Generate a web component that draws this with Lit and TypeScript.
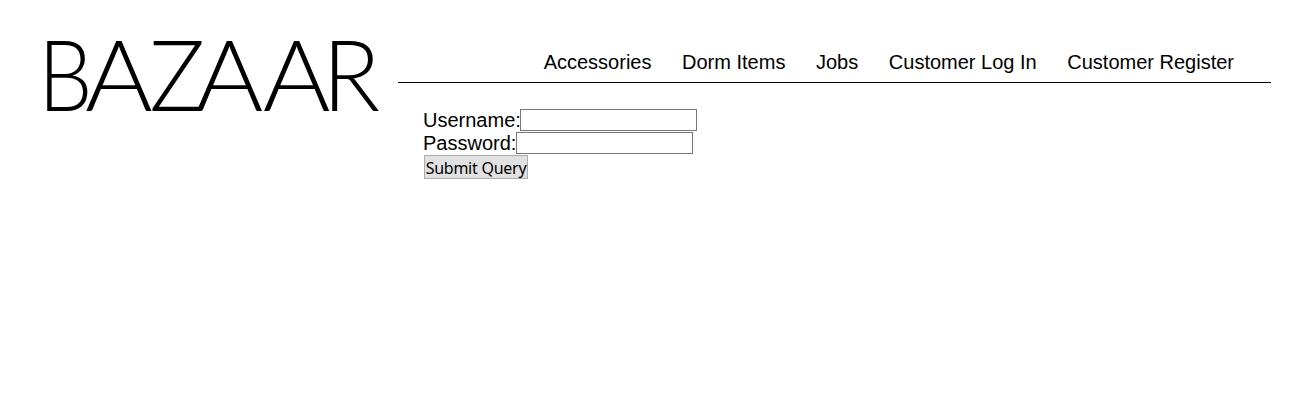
import { LitElement, html, svg, css } from "lit";
import { customElement } from "lit/decorators.js";

const LINKS = ["Accessories", "Dorm Items", "Jobs", "Customer Log In", "Customer Register"];

// Wordmark letters: character, pen position, horizontal stretch.
const LETTERS: [string, number, number][] = [
  ["B", 38.3, 0.87],
  ["A", 85, 1.05],
  ["Z", 149.2, 0.95],
  ["A", 195.5, 1.05],
  ["A", 262.8, 1.05],
  ["R", 322.3, 0.97],
];

@customElement("app-root")
export class AppRoot extends LitElement {
  static styles = css`
    :host { display: flex; height: 416px; background: #fff; color: #000;
      font: 20px/23px "Liberation Sans", Arial, sans-serif; }
    .logo { display: block; width: 398px; height: 170px; flex: none; }
    .logo text { font-family: Lato, sans-serif; font-weight: 300; font-size: 98.5px; fill: #000; }
    .main { width: 873px; display: flex; flex-direction: column; }
    nav { box-sizing: border-box; height: 83px; padding: 51px 37px 0 0; display: flex;
      justify-content: flex-end; gap: 30.6px; border-bottom: 1px solid #000; white-space: nowrap; }
    a { color: inherit; text-decoration: none; }
    form { padding: 25px 0 0 25px; display: flex; flex-direction: column; align-items: flex-start; }
    label { display: flex; height: 23px; line-height: 24px; }
    input { box-sizing: border-box; width: 177px; height: 22px; margin: 1px 0 0; padding: 1px 2px;
      border: 1px solid #767676; border-radius: 0; background: #fff; font: 16px "Liberation Sans", sans-serif; }
    .user { margin-left: -0.8px; }
    .pass { margin-left: -0.4px; }
    button { box-sizing: border-box; width: 104px; height: 24px; margin: 1px 0 0 1px; padding: 1px 0 0;
      border: 1px solid #adadad; border-radius: 0; background: #e1e1e1; color: #000;
      font: 16px/22px "Noto Sans", sans-serif; letter-spacing: -0.25px; white-space: nowrap; }
  `;

  render() {
    return html`
      <svg class="logo" viewBox="0 0 398 170" role="img" aria-label="Bazaar">
        ${LETTERS.map(([c, x, s]) => svg`<text transform="translate(${x} 110.5) scale(${s} 1)">${c}</text>`)}
      </svg>
      <div class="main">
        <nav>${LINKS.map((t) => html`<a href="#">${t}</a>`)}</nav>
        <form>
          <label>Username:<input class="user" type="text" /></label>
          <label>Password:<input class="pass" type="password" /></label>
          <button type="button">Submit Query</button>
        </form>
      </div>
    `;
  }
}
